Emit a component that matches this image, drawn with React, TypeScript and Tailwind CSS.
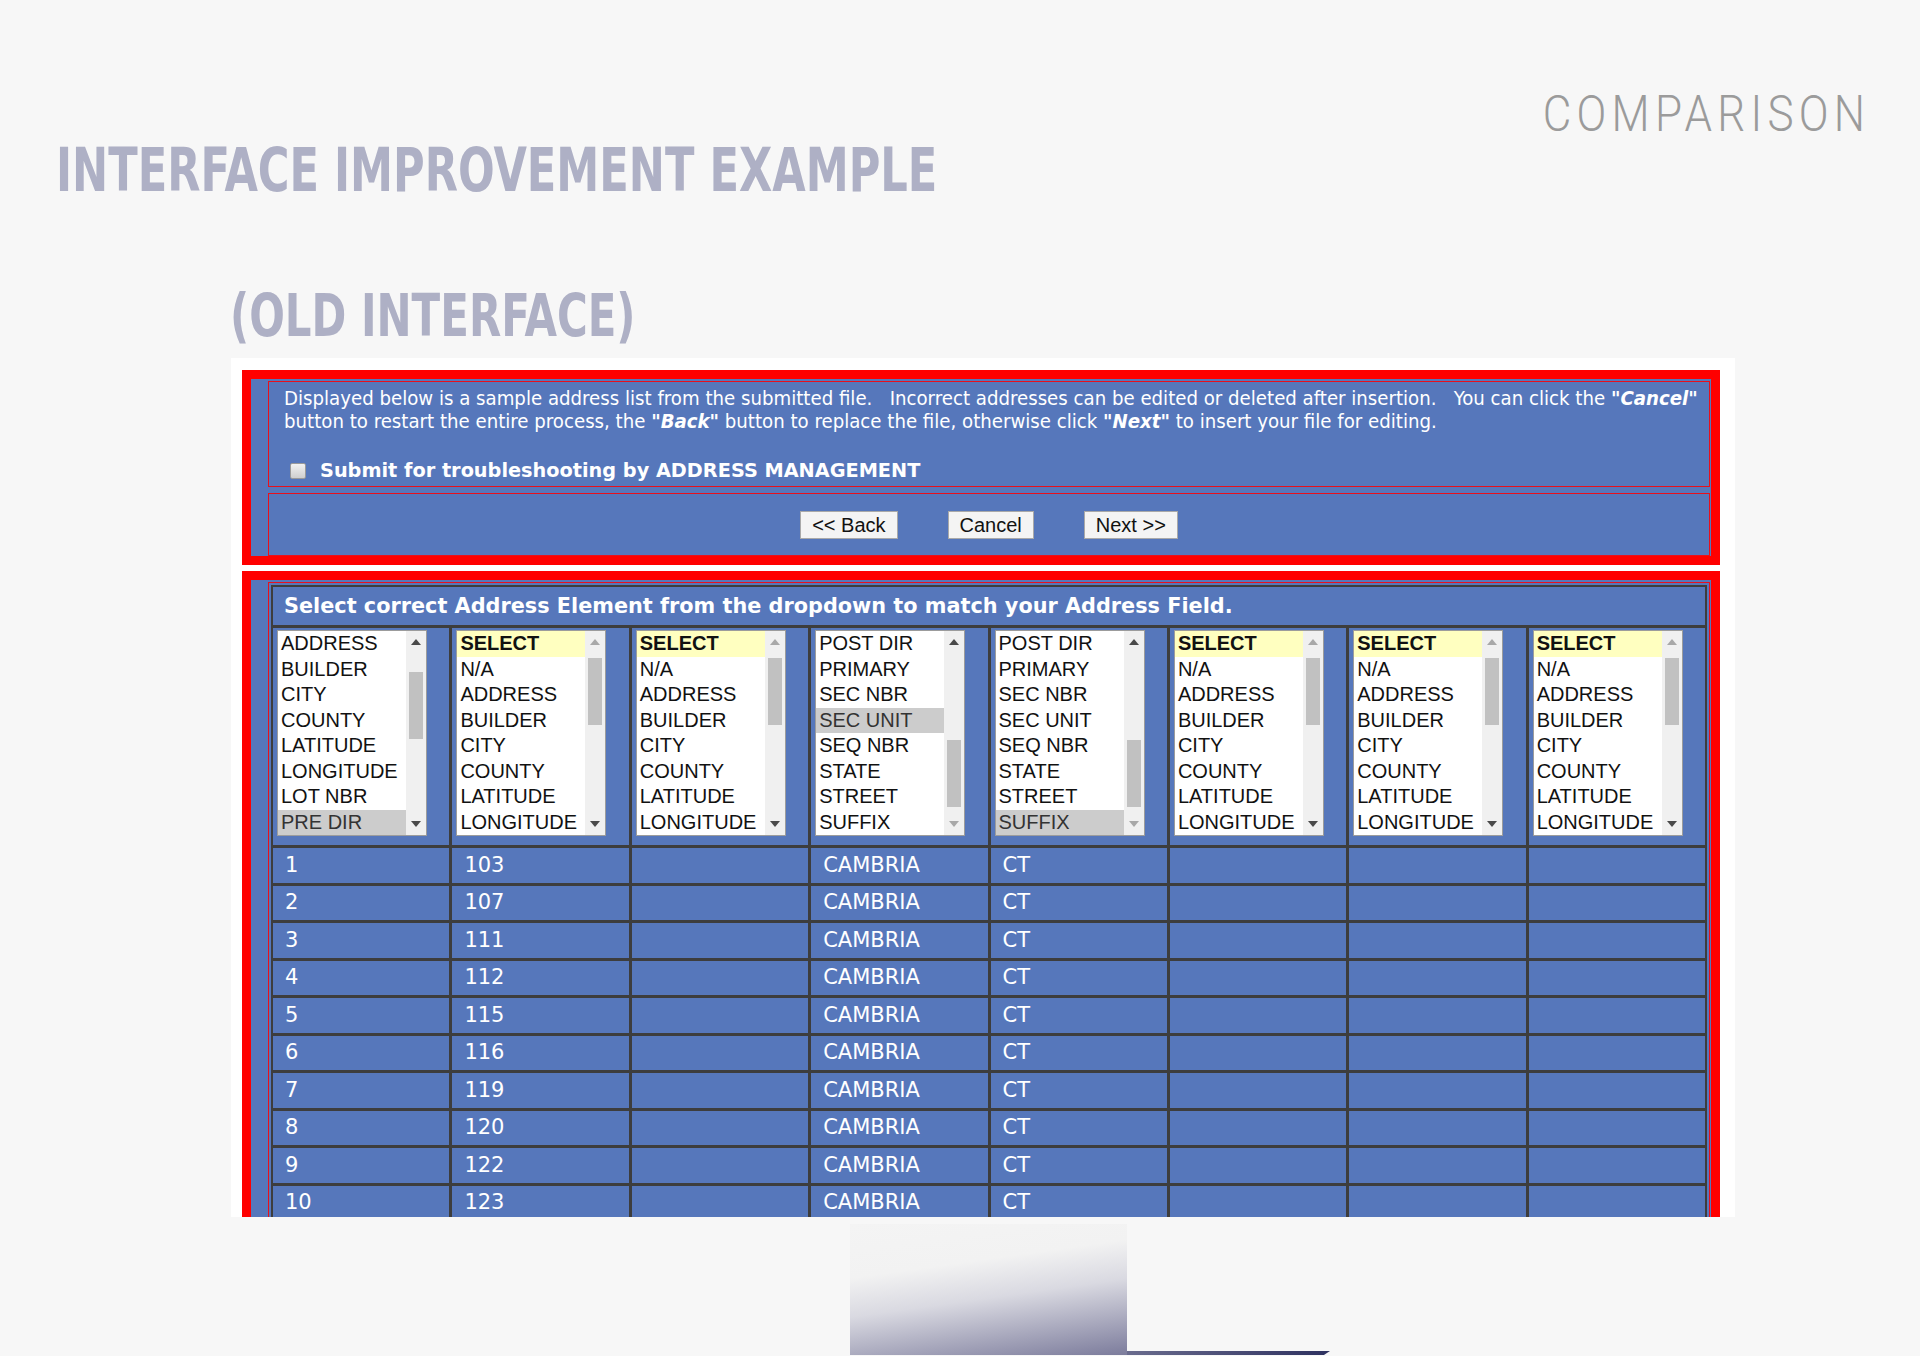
import React from 'react';

const SELECT_OPTS = ['SELECT', 'N/A', 'ADDRESS', 'BUILDER', 'CITY', 'COUNTY', 'LATITUDE', 'LONGITUDE'];
const TAIL_OPTS = ['POST DIR', 'PRIMARY', 'SEC NBR', 'SEC UNIT', 'SEQ NBR', 'STATE', 'STREET', 'SUFFIX'];

interface ListConfig {
  items: string[];
  selected?: number;
  firstIsSelect?: boolean;
  thumb: number;
  upOn: boolean;
  downOn: boolean;
}

const lists: ListConfig[] = [
  {
    items: ['ADDRESS', 'BUILDER', 'CITY', 'COUNTY', 'LATITUDE', 'LONGITUDE', 'LOT NBR', 'PRE DIR'],
    selected: 7,
    thumb: 19,
    upOn: true,
    downOn: true,
  },
  { items: SELECT_OPTS, firstIsSelect: true, thumb: 5, upOn: false, downOn: true },
  { items: SELECT_OPTS, firstIsSelect: true, thumb: 5, upOn: false, downOn: true },
  { items: TAIL_OPTS, selected: 3, thumb: 87, upOn: true, downOn: false },
  { items: TAIL_OPTS, selected: 7, thumb: 87, upOn: true, downOn: false },
  { items: SELECT_OPTS, firstIsSelect: true, thumb: 5, upOn: false, downOn: true },
  { items: SELECT_OPTS, firstIsSelect: true, thumb: 5, upOn: false, downOn: true },
  { items: SELECT_OPTS, firstIsSelect: true, thumb: 5, upOn: false, downOn: true },
];

const rows = ['103', '107', '111', '112', '115', '116', '119', '120', '122', '123'];

const Arrow = ({ up, on }: { up: boolean; on: boolean }) => (
  <svg width="10" height="6" viewBox="0 0 10 6">
    <polygon points={up ? '0,6 10,6 5,0' : '0,0 10,0 5,6'} fill={on ? '#4a4a4a' : '#a8a8a8'} />
  </svg>
);

const ListBox = ({ cfg }: { cfg: ListConfig }) => (
  <div className="flex h-[206px] w-[150px] border border-[#9c9c9c] bg-white">
    <div className="flex flex-1 flex-col font-['Liberation_Sans',Arial,sans-serif] text-[20px] text-[#111]">
      {cfg.items.map((it, i) => {
        const sel = cfg.selected === i;
        const isSelect = cfg.firstIsSelect && i === 0;
        return (
          <div
            key={i}
            className={
              'h-[25.5px] whitespace-nowrap pl-[3px] leading-[25.5px] ' +
              (sel ? 'bg-[#cccccc] text-[#333]' : '') +
              (isSelect ? 'bg-[#ffffc0] font-bold' : '')
            }
          >
            {it}
          </div>
        );
      })}
    </div>
    <div className="flex w-[20px] flex-col bg-[#f0f0f0]">
      <div className="flex h-[22px] items-center justify-center">
        <Arrow up on={cfg.upOn} />
      </div>
      <div className="flex-1 px-[3px]">
        <div className="h-[67px] bg-[#c1c1c1]" style={{ marginTop: cfg.thumb }} />
      </div>
      <div className="flex h-[22px] items-center justify-center">
        <Arrow up={false} on={cfg.downOn} />
      </div>
    </div>
  </div>
);

const Btn = ({ children }: { children: React.ReactNode }) => (
  <button className="h-[28px] border border-[#a9a9a9] bg-[#f4f4f4] px-[11px] font-['Liberation_Sans',Arial,sans-serif] text-[20px] leading-none text-[#111]">
    {children}
  </button>
);

export default function App() {
  return (
    <div className="h-[1356px] w-[1920px] overflow-hidden bg-[#f7f7f7]">
      <div className="flex justify-end pr-[50px] pt-[89px]">
        <span className="origin-right scale-x-[0.88] font-['Roboto',sans-serif] text-[50px] leading-none font-light tracking-[6px] text-[#9b9b9b]">
          COMPARISON
        </span>
      </div>
      <div className="mt-[1px] pl-[56px]">
        <h1 className="inline-block origin-left scale-x-[0.8] font-['DejaVu_Sans_Condensed','DejaVu_Sans',sans-serif] text-[60px] leading-none font-bold whitespace-nowrap text-[#aeb0c5]">
          INTERFACE IMPROVEMENT EXAMPLE
        </h1>
      </div>
      <div className="mt-[86px] pl-[230px]">
        <h2 className="inline-block origin-left scale-x-[0.79] font-['DejaVu_Sans_Condensed','DejaVu_Sans',sans-serif] text-[59px] leading-none font-bold whitespace-nowrap text-[#aeb0c5]">
          (OLD INTERFACE)
        </h2>
      </div>

      <div className="mt-[13px] ml-[231px] h-[859px] w-[1504px] overflow-hidden bg-white pt-[12px] pr-[15px] pl-[11px]">
        {/* top block */}
        <div className="border-[9px] border-[#ff0000] bg-[#5677bb] pt-[2px] pr-[1px] pl-[17px]">
          <div className="h-[106px] border border-[#e8101c] pt-[5px] pl-[15px] font-['DejaVu_Sans_Condensed','DejaVu_Sans',sans-serif] text-white">
            <p className="text-[20.2px] leading-[23px] whitespace-pre">
              {'Displayed below is a sample address list from the submitted file.   Incorrect addresses can be edited or deleted after insertion.   You can click the '}
              <b><i>"Cancel"</i></b>
              {'\nbutton to restart the entire process, the '}
              <b><i>"Back"</i></b>
              {' button to replace the file, otherwise click '}
              <b><i>"Next"</i></b>
              {' to insert your file for editing.'}
            </p>
            <div className="mt-[28px] flex items-center">
              <span className="ml-[6px] h-[16px] w-[16px] rounded-[2px] border border-[#9a9a9a] bg-gradient-to-b from-[#f2f2f2] to-[#cfcfcf]" />
              <span className="ml-[14px] font-['DejaVu_Sans',sans-serif] text-[19.3px] leading-none font-bold">
                Submit for troubleshooting by ADDRESS MANAGEMENT
              </span>
            </div>
          </div>
          <div className="mt-[6px] flex h-[63px] items-center justify-center gap-[50px] border border-[#e8101c]">
            <Btn>&lt;&lt; Back</Btn>
            <Btn>Cancel</Btn>
            <Btn>Next &gt;&gt;</Btn>
          </div>
        </div>

        {/* table block */}
        <div className="mt-[6px] border-[9px] border-[#ff0000] bg-[#5677bb] pt-[2px] pr-[1px] pl-[17px]">
          <div className="border border-[#e8101c] p-[2px]">
            <div className="grid grid-cols-8 gap-[3px] border-[2px] border-[#3d3d3d] bg-[#3d3d3d] font-['DejaVu_Sans',sans-serif] text-white">
              <div className="col-span-8 flex h-[38px] items-center bg-[#5677bb] pt-[1px] pl-[11px] text-[20.8px] font-bold">
                Select correct Address Element from the dropdown to match your Address Field.
              </div>
              {lists.map((cfg, i) => (
                <div key={i} className="h-[217px] bg-[#5677bb] pt-[2px] pl-[4px]">
                  <ListBox cfg={cfg} />
                </div>
              ))}
              {rows.map((num, r) => {
                const cells = [String(r + 1), num, '', 'CAMBRIA', 'CT', '', '', ''];
                return cells.map((c, ci) => (
                  <div
                    key={r + '-' + ci}
                    className="flex h-[34.5px] items-center bg-[#5677bb] pl-[12px] text-[21px]"
                  >
                    {c}
                  </div>
                ));
              })}
            </div>
          </div>
        </div>
      </div>

      <div className="mt-[7px] ml-[850px] flex items-end">
        <div className="h-[131px] w-[277px] bg-[linear-gradient(172deg,#f4f4f4_0%,#f2f2f2_32%,#d9d9e1_55%,#7c7c9c_100%)]" />
        <div className="h-[4px] w-[203px] bg-[linear-gradient(90deg,#6a6c8e,#2e3160)] [clip-path:polygon(0_0,100%_0,97%_100%,0_100%)]" />
      </div>
    </div>
  );
}
